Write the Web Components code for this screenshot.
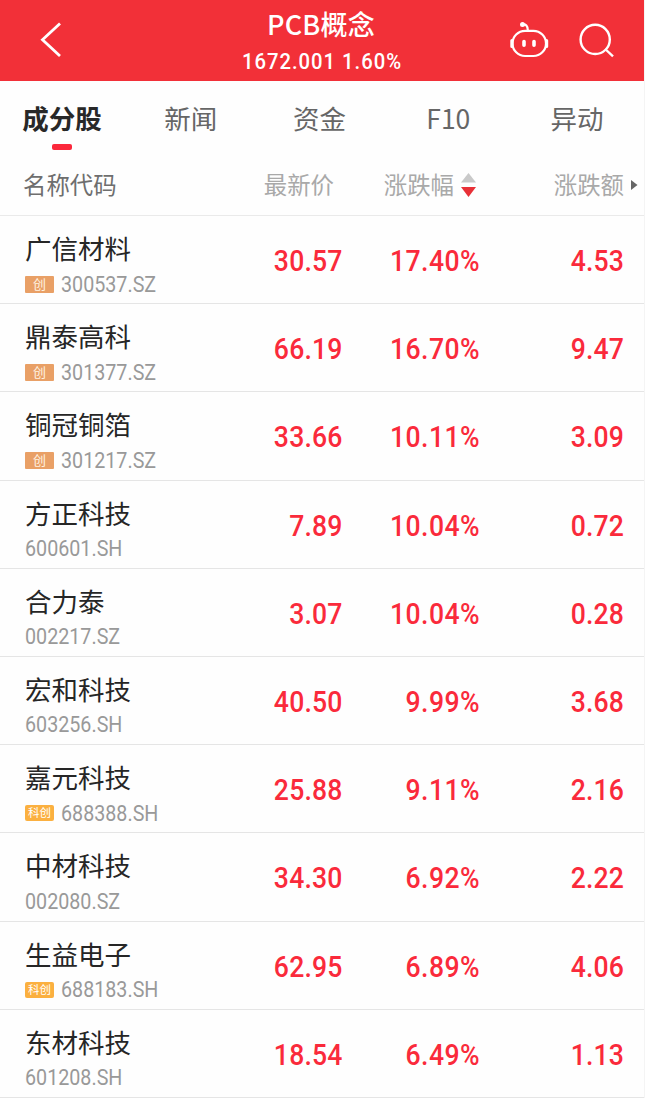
<!DOCTYPE html>
<html lang="zh-CN">
<head>
<meta charset="utf-8">
<meta name="viewport" content="width=device-width, initial-scale=1">
<title>PCB概念</title>
<style>
  body {
    margin: 0;
    background: #fefefe;
    font-family: "Noto Sans CJK SC", sans-serif;
    overflow: hidden;
  }
</style>
</head>
<body>
<stock-board></stock-board>

<script>
const tabs = ["成分股", "新闻", "资金", "F10", "异动"];

const stocks = [
  { name: "广信材料", code: "300537.SZ", badge: "创", price: "30.57", percent: "17.40%", change: "4.53" },
  { name: "鼎泰高科", code: "301377.SZ", badge: "创", price: "66.19", percent: "16.70%", change: "9.47" },
  { name: "铜冠铜箔", code: "301217.SZ", badge: "创", price: "33.66", percent: "10.11%", change: "3.09" },
  { name: "方正科技", code: "600601.SH", price: "7.89", percent: "10.04%", change: "0.72" },
  { name: "合力泰", code: "002217.SZ", price: "3.07", percent: "10.04%", change: "0.28" },
  { name: "宏和科技", code: "603256.SH", price: "40.50", percent: "9.99%", change: "3.68" },
  { name: "嘉元科技", code: "688388.SH", badge: "科创", price: "25.88", percent: "9.11%", change: "2.16" },
  { name: "中材科技", code: "002080.SZ", price: "34.30", percent: "6.92%", change: "2.22" },
  { name: "生益电子", code: "688183.SH", badge: "科创", price: "62.95", percent: "6.89%", change: "4.06" },
  { name: "东材科技", code: "601208.SH", price: "18.54", percent: "6.49%", change: "1.13" },
];

/** Red bar at the top: back button, title with index value, action icons. */
class BoardHeader extends HTMLElement {
  constructor() {
    super();
    this.attachShadow({ mode: "open" });
  }

  connectedCallback() {
    this.shadowRoot.innerHTML = `
      <style>
        :host {
          display: grid;
          grid-template-columns: 1fr 240px 1fr;
          height: 81px;
          background: #f23038;
          color: #fff;
        }
        svg {
          display: block;
          fill: none;
          stroke: #fff;
        }
        .back {
          padding: 21px 0 0 38px;
        }
        .middle {
          text-align: center;
          white-space: nowrap;
        }
        .title {
          padding: 4px 2px 0 0;
          font-size: 27px;
          font-weight: 500;
          line-height: 40px;
          letter-spacing: 0.2px;
        }
        .value {
          font: 500 22.5px/35px Roboto, sans-serif;
          letter-spacing: 1.1px;
          transform: scaleX(0.9);
        }
        .actions {
          display: flex;
          justify-content: flex-end;
          gap: 30px;
          padding: 20px 29px 0 0;
        }
      </style>
      <div class="back">
        <svg width="25" height="38" viewBox="0 0 25 38" stroke-width="2.8">
          <path d="M22 2.500L4.500 18.800L22 35" />
        </svg>
      </div>
      <div class="middle">
        <div class="title"><slot name="title"></slot></div>
        <div class="value"><slot name="value"></slot></div>
      </div>
      <div class="actions">
        <svg width="40" height="40" viewBox="0 0 40 40" stroke-width="2.200">
          <rect x="3.500" y="10.800" width="33.500" height="25.200" rx="12.600" />
          <path d="M13.500 4.500C17 4 18.600 6 18.800 10" />
          <circle cx="13.500" cy="4.600" r="2.500" fill="#fff" stroke="none" />
          <path d="M2.900 20.500v6M37.600 20.500v6" stroke-width="3.200" stroke-linecap="round" />
          <path d="M15 21.500v3.800M25 21.500v3.800" stroke-width="3.600" stroke-linecap="round" />
        </svg>
        <svg width="36" height="40" viewBox="0 0 36 40" stroke-width="2.400">
          <circle cx="16.200" cy="19.400" r="14.600" />
          <path d="M26.700 29.500L34 36.400" />
        </svg>
      </div>`;
  }
}
customElements.define("board-header", BoardHeader);

class TabItem extends HTMLElement {
  constructor() {
    super();
    this.attachShadow({ mode: "open" });
  }

  connectedCallback() {
    this.shadowRoot.innerHTML = `
      <style>
        :host {
          display: flex;
          flex: 1;
          flex-direction: column;
          align-items: center;
          color: #666;
          font-size: 26.5px;
          line-height: 40px;
        }
        :host([active]) {
          color: #282828;
          font-weight: 700;
        }
        :host([active])::after {
          content: "";
          width: 20px;
          height: 5.500px;
          margin-top: 6px;
          border-radius: 2px;
          background: #fb283b;
        }
      </style>
      <slot></slot>`;
  }
}
customElements.define("tab-item", TabItem);

class TabBar extends HTMLElement {
  constructor() {
    super();
    this.attachShadow({ mode: "open" });
  }

  connectedCallback() {
    this.shadowRoot.innerHTML = `
      <style>
        :host {
          display: flex;
          box-sizing: border-box;
          height: 74px;
          margin: 0 2.5px 0 -2.5px;
          padding-top: 17px;
        }
      </style>
      <slot></slot>`;
  }
}
customElements.define("tab-bar", TabBar);

/** Column titles with the sort arrows and the scroll hint. */
class ListHead extends HTMLElement {
  constructor() {
    super();
    this.attachShadow({ mode: "open" });
  }

  connectedCallback() {
    this.shadowRoot.innerHTML = `
      <style>
        :host {
          display: grid;
          grid-template-columns: 177px 134px 142px 1fr;
          align-items: center;
          height: 60px;
          padding: 0 6px 0 23px;
          border-bottom: 1px solid #eaeaea;
          color: #a9a9a9;
          font-size: 23.4px;
          line-height: 34px;
        }
        .cell {
          display: flex;
          align-items: center;
          justify-content: flex-end;
          gap: 7px;
        }
        .name {
          justify-content: flex-start;
          color: #6e6e6e;
        }
        .label {
          padding-bottom: 2px;
        }
        svg {
          display: block;
        }
      </style>
      <div class="cell name"><span class="label">名称代码</span></div>
      <div class="cell"><span class="label">最新价</span></div>
      <div class="cell">
        <span class="label">涨跌幅</span>
        <svg width="15" height="24" viewBox="0 0 15 24">
          <path d="M7.500 0L15 9.500H0z" fill="#c9c9c9" />
          <path d="M0 14h15L7.500 24z" fill="#e83037" />
        </svg>
      </div>
      <div class="cell">
        <span class="label">涨跌额</span>
        <svg width="7" height="10" viewBox="0 0 7 10"><path d="M0 0l6.500 5L0 10z" fill="#666" /></svg>
      </div>`;
  }
}
customElements.define("list-head", ListHead);

class BoardBadge extends HTMLElement {
  constructor() {
    super();
    this.attachShadow({ mode: "open" });
  }

  connectedCallback() {
    this.shadowRoot.innerHTML = `
      <style>
        :host {
          display: block;
          width: 29px;
          height: 17px;
          margin-right: 7px;
          border-radius: 1px;
          background: #e9a066;
          color: #fff3e2;
          font-size: 13px;
          line-height: 16px;
          text-align: center;
        }
        :host([kind="科创"]) {
          height: 16px;
          border-radius: 2px;
          background: #fbb040;
          color: #fff;
          font-size: 11.5px;
          line-height: 15px;
        }
      </style>
      <slot></slot>`;
  }
}
customElements.define("board-badge", BoardBadge);

class StockRow extends HTMLElement {
  constructor() {
    super();
    this.attachShadow({ mode: "open" });
  }

  set stock(stock) {
    this._stock = stock;
    this.render();
  }

  connectedCallback() {
    this.render();
  }

  render() {
    if (!this._stock) return;
    const { name, code, badge, price, percent, change } = this._stock;

    this.shadowRoot.innerHTML = `
      <style>
        :host {
          display: grid;
          grid-template-columns: 175px 142.5px 137px 144px;
          box-sizing: border-box;
          height: 88.2px;
          padding-left: 25px;
          border-bottom: 1px solid #e5e5e5;
        }
        .name {
          padding-top: 13px;
          color: #262626;
          font-size: 26.5px;
          line-height: 38px;
        }
        .code {
          display: flex;
          align-items: center;
          height: 34px;
          color: #999;
          font: 21.200px/34px Roboto, sans-serif;
        }
        .code span {
          padding-top: 1px;
          transform: scaleX(0.93);
          transform-origin: left;
        }
        board-badge {
          font-family: "Noto Sans CJK SC", sans-serif;
        }
        /* digits are drawn a little condensed */
        .number {
          padding-top: 25px;
          color: #fa2a3b;
          font: 500 29.5px/40px Roboto, sans-serif;
          letter-spacing: 0.2px;
          text-align: right;
          transform: scaleX(0.9);
          transform-origin: right;
        }
        .percent {
          letter-spacing: 0.5px;
        }
      </style>
      <div>
        <div class="name">${name}</div>
        <div class="code">${badge ? `<board-badge kind="${badge}">${badge}</board-badge>` : ""}<span>${code}</span></div>
      </div>
      <div class="number">${price}</div>
      <div class="number percent">${percent}</div>
      <div class="number">${change}</div>`;
  }
}
customElements.define("stock-row", StockRow);

class StockBoard extends HTMLElement {
  constructor() {
    super();
    this.attachShadow({ mode: "open" });
  }

  connectedCallback() {
    this.shadowRoot.innerHTML = `
      <style>
        :host {
          display: block;
          box-sizing: border-box;
          width: 645px;
          height: 1098px;
          overflow: hidden;
          border-right: 1px solid #f4f4f4;
        }
      </style>
      <board-header>
        <span slot="title">PCB概念</span>
        <span slot="value">1672.001 1.60%</span>
      </board-header>
      <tab-bar>
        ${tabs.map((tab, i) => `<tab-item${i === 0 ? " active" : ""}>${tab}</tab-item>`).join("")}
      </tab-bar>
      <list-head></list-head>
      <div class="list"></div>`;

    const list = this.shadowRoot.querySelector(".list");
    for (const stock of stocks) {
      const row = document.createElement("stock-row");
      row.stock = stock;
      list.append(row);
    }
  }
}
customElements.define("stock-board", StockBoard);
</script>
</body>
</html>
